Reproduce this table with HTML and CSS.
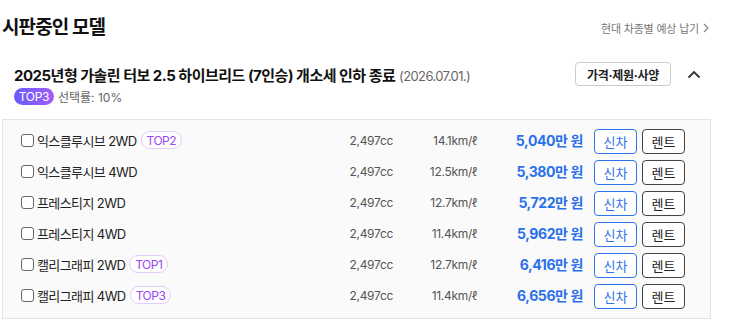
FILE: index.html
```html
<!DOCTYPE html>
<html lang="ko">
<head>
<meta charset="utf-8">
<link rel="stylesheet" href="styles.css">
</head>
<body>
<div class="wrap">
  <div class="header">
    <h2 class="title">시판중인 모델</h2>
    <a class="more">현대 차종별 예상 납기 <svg class="more-arrow" width="6" height="10" viewBox="0 0 6 10"><path d="M1 1l4 4-4 4" fill="none" stroke="#888" stroke-width="1.2"/></svg></a>
  </div>

  <div class="group-head">
    <div class="group-title"><strong>2025년형 가솔린 터보 2.5 하이브리드 (7인승) 개소세 인하 종료</strong> <span class="date">(2026.07.01.)</span></div>
    <div class="group-actions">
      <button class="spec-btn">가격·제원·사양</button>
      <svg class="chev" width="14" height="9" viewBox="0 0 14 9"><path d="M1.5 7.5L7 2l5.5 5.5" fill="none" stroke="#333" stroke-width="1.8"/></svg>
    </div>
  </div>
  <div class="rate-row">
    <span class="badge-fill">TOP3</span>
    <span class="rate">선택률: 10%</span>
  </div>

  <div class="table">
    <div class="row">
      <div class="name"><span class="cb"></span>익스클루시브 2WD <span class="badge-line">TOP2</span></div>
      <div class="cc">2,497cc</div>
      <div class="km">14.1km/ℓ</div>
      <div class="price"><b>5,040</b>만 원</div>
      <button class="btn-new">신차</button>
      <button class="btn-rent">렌트</button>
    </div>
    <div class="row">
      <div class="name"><span class="cb"></span>익스클루시브 4WD</div>
      <div class="cc">2,497cc</div>
      <div class="km">12.5km/ℓ</div>
      <div class="price"><b>5,380</b>만 원</div>
      <button class="btn-new">신차</button>
      <button class="btn-rent">렌트</button>
    </div>
    <div class="row">
      <div class="name"><span class="cb"></span>프레스티지 2WD</div>
      <div class="cc">2,497cc</div>
      <div class="km">12.7km/ℓ</div>
      <div class="price"><b>5,722</b>만 원</div>
      <button class="btn-new">신차</button>
      <button class="btn-rent">렌트</button>
    </div>
    <div class="row">
      <div class="name"><span class="cb"></span>프레스티지 4WD</div>
      <div class="cc">2,497cc</div>
      <div class="km">11.4km/ℓ</div>
      <div class="price"><b>5,962</b>만 원</div>
      <button class="btn-new">신차</button>
      <button class="btn-rent">렌트</button>
    </div>
    <div class="row">
      <div class="name"><span class="cb"></span>캘리그래피 2WD <span class="badge-line">TOP1</span></div>
      <div class="cc">2,497cc</div>
      <div class="km">12.7km/ℓ</div>
      <div class="price"><b>6,416</b>만 원</div>
      <button class="btn-new">신차</button>
      <button class="btn-rent">렌트</button>
    </div>
    <div class="row">
      <div class="name"><span class="cb"></span>캘리그래피 4WD <span class="badge-line">TOP3</span></div>
      <div class="cc">2,497cc</div>
      <div class="km">11.4km/ℓ</div>
      <div class="price"><b>6,656</b>만 원</div>
      <button class="btn-new">신차</button>
      <button class="btn-rent">렌트</button>
    </div>
  </div>
</div>
</body>
</html>
```

FILE: styles.css
```css
* { box-sizing: border-box; }
body {
  margin: 0;
  background: #fff;
  font-family: Inter, "Noto Sans CJK KR", sans-serif;
  color: #111;
}
.wrap {
  width: 711px;
  padding-left: 2px;
}
.header {
  display: flex;
  justify-content: space-between;
  align-items: center;
  margin-top: 14px;
  height: 28px;
}
.title {
  margin: 0;
  font-size: 19px;
  font-weight: 700;
  letter-spacing: -0.9px;
  line-height: 28px;
}
.more {
  font-size: 11px;
  color: #777;
  display: flex;
  align-items: center;
  gap: 4px;
  padding-right: 2px;
  letter-spacing: -0.2px;
}
.group-head {
  display: flex;
  justify-content: space-between;
  align-items: center;
  margin-top: 20px;
  height: 24px;
  padding-left: 12px;
}
.group-title {
  font-size: 15px;
  letter-spacing: -0.5px;
}
.group-title strong { font-weight: 700; }
.date {
  font-size: 13px;
  color: #666;
  letter-spacing: -0.6px;
}
.group-actions {
  display: flex;
  align-items: center;
}
.spec-btn {
  height: 24px;
  width: 96px;
  padding: 0;
  border: 1px solid #ccc;
  border-radius: 4px;
  background: #fff;
  font-family: inherit;
  font-size: 12px;
  font-weight: 700;
  color: #222;
  letter-spacing: -0.3px;
}
.chev {
  margin-left: 16px;
  margin-right: 10px;
}
.rate-row {
  display: flex;
  align-items: center;
  margin-top: 2px;
  height: 17px;
  padding-left: 12px;
  gap: 4px;
}
.badge-fill {
  display: inline-flex;
  align-items: center;
  justify-content: center;
  width: 40px;
  height: 17px;
  border-radius: 9px;
  background: linear-gradient(90deg, #6a5cff, #a05cf6);
  color: #fff;
  font-size: 12px;
  letter-spacing: -0.3px;
}
.rate {
  font-size: 12px;
  color: #666;
}
.table {
  margin-top: 14px;
  border: 1px solid #e4e4e4;
  background: #fafafa;
  padding: 6px 25px 6px 18px;
}
.row {
  display: flex;
  align-items: center;
  height: 31px;
}
.name {
  flex: 1;
  display: flex;
  align-items: center;
  font-size: 13px;
  letter-spacing: -0.6px;
  color: #222;
  padding-bottom: 3px;
}
.cb {
  width: 13px;
  height: 13px;
  border: 1px solid #666;
  border-radius: 3px;
  background: #fff;
  margin-right: 3px;
}
.badge-line {
  display: inline-flex;
  align-items: center;
  justify-content: center;
  height: 18px;
  padding: 0 5px;
  margin-left: 4px;
  border: 1px solid #e2cdfc;
  border-radius: 9px;
  color: #9a46f5;
  font-size: 12px;
  letter-spacing: -0.5px;
  background: #fff;
}
.cc, .km {
  font-size: 12px;
  color: #555;
  text-align: right;
  padding-bottom: 3px;
  letter-spacing: -0.3px;
}
.cc { width: 60px; }
.km { width: 84px; }
.price {
  width: 106px;
  text-align: right;
  color: #2a70ea;
  font-size: 14px;
  font-weight: 700;
  letter-spacing: -0.4px;
  padding-bottom: 3px;
}
.price b { font-weight: 700; }
.btn-new, .btn-rent {
  width: 43px;
  height: 25px;
  padding: 0;
  border-radius: 4px;
  background: #fff;
  font-family: inherit;
  font-size: 13px;
}
.btn-new {
  margin-left: 11px;
  border: 1px solid #2f74ea;
  color: #2f74ea;
}
.btn-rent {
  margin-left: 5px;
  border: 1px solid #444;
  color: #222;
}
```
